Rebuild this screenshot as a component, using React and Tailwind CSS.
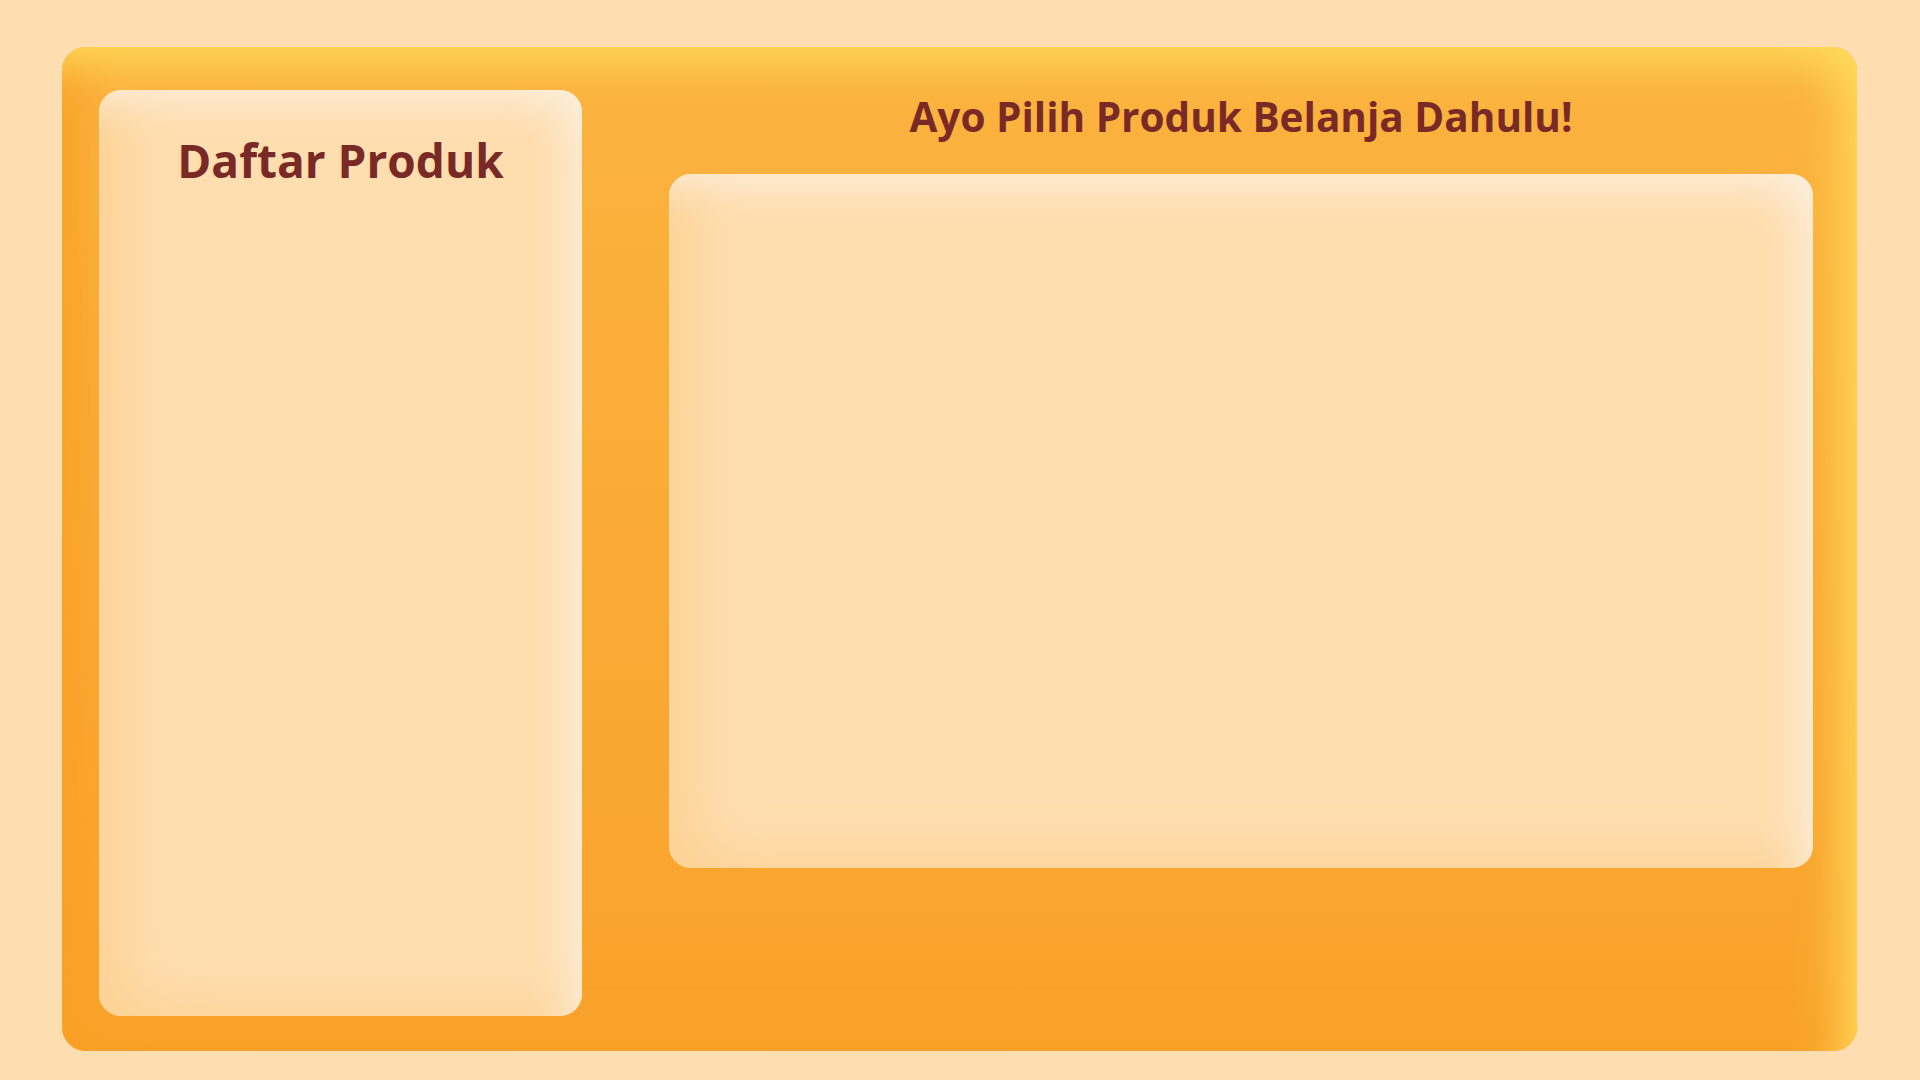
export default function App() {
  return (
    <div className="w-[1920px] h-[1080px] bg-[#FEDDB0] pt-[47px] pl-[62px] overflow-hidden" style={{ fontFamily: "'Open Sans', 'Noto Sans', sans-serif" }}>
      <div className="w-[1795px] h-[1004px] rounded-[24px] bg-linear-to-b from-[#FBB33F] to-[#F9A22B] shadow-[inset_-30px_30px_45px_-15px_#FFDA5A,inset_30px_-30px_45px_-15px_#F9A027] flex pl-[37px] pt-[43px]">
        <div className="w-[483px] h-[926px] rounded-[22px] bg-[#FEDDAE] shadow-[inset_-30px_30px_45px_-20px_#FDEFDD,inset_45px_-30px_50px_-20px_#FDD295] flex flex-col items-center">
          <h2 className="mt-[40px] text-[46px] leading-[60px] font-bold text-[#7A2A26]">Daftar Produk</h2>
        </div>
        <div className="ml-[87px] flex flex-col items-center w-[1144px]">
          <h1 className="h-[84px] text-[40.5px] leading-[54px] font-bold text-[#7A2A26]">Ayo Pilih Produk Belanja Dahulu!</h1>
          <div className="w-[1144px] h-[694px] rounded-[22px] bg-[#FEDDAE] shadow-[inset_-30px_30px_45px_-20px_#FDEFDD,inset_45px_-30px_50px_-20px_#FDD295]"></div>
        </div>
      </div>
    </div>
  );
}
